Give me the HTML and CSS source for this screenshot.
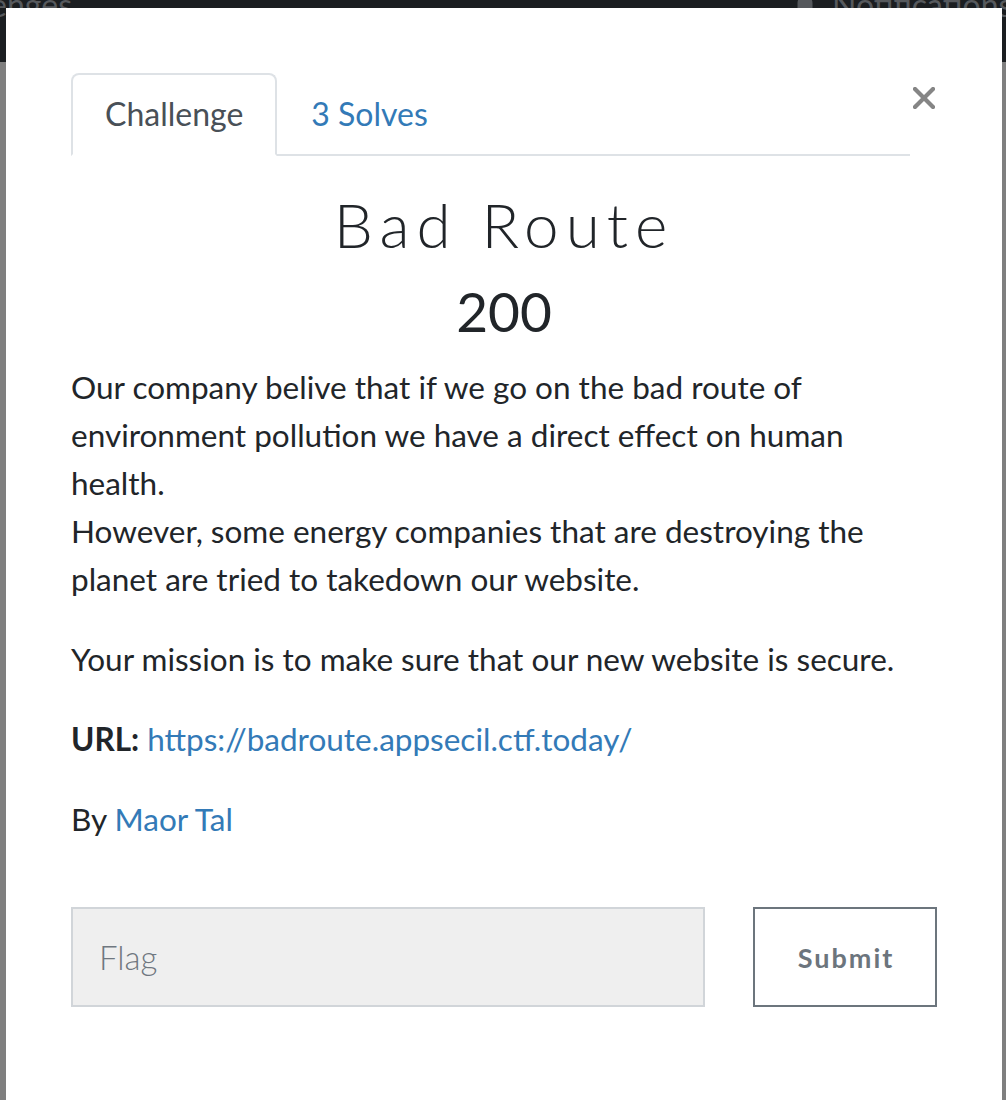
FILE: index.html
```html
<!DOCTYPE html>
<html lang="en">
<head>
<meta charset="utf-8">
<title>Bad Route</title>
<link rel="stylesheet" href="styles.css">
</head>
<body>
<header class="navbar">
  <div class="navbar-inner">
    <div class="nav-left"><span class="nav-text">Challenges</span></div>
    <div class="nav-right">
      <svg class="bell" viewBox="0 0 20 24" width="20" height="24"><path d="M10 0c1.2 0 2 .8 2 2v.6c3.4.9 5.5 3.8 5.5 7.4v6l2.5 3v1H0v-1l2.5-3v-6C2.5 6.4 4.6 3.5 8 2.6V2c0-1.2.8-2 2-2z" fill="#55585c"/></svg>
      <span class="nav-text">Notifications</span>
    </div>
  </div>
</header>

<div class="modal">
  <div class="modal-body">
    <div class="tab-row">
      <ul class="tabs">
        <li class="tab active">Challenge</li>
        <li class="tab">3 Solves</li>
      </ul>
      <button class="close" type="button" aria-label="Close">
        <svg viewBox="0 0 22 22" width="22" height="22"><path d="M2 2L20 20M20 2L2 20" stroke="#858585" stroke-width="4.2" stroke-linecap="square"/></svg>
      </button>
    </div>

    <h2 class="title">Bad Route</h2>
    <h3 class="points">200</h3>

    <div class="desc">
      <p>Our company belive that if we go on the bad route of environment pollution we have a direct effect on human health.<br>However, some energy companies that are destroying the planet are tried to takedown our website.</p>
      <p>Your mission is to make sure that our new website is secure.</p>
      <p><strong>URL:</strong> <a href="#">https://badroute.appsecil.ctf.today/</a></p>
      <p>By <a href="#">Maor Tal</a></p>
    </div>

    <form class="flag-form">
      <input class="flag-input" type="text" placeholder="Flag">
      <button class="submit" type="button">Submit</button>
    </form>
  </div>
</div>
</body>
</html>
```

FILE: styles.css
```css
html, body {
  margin: 0;
  padding: 0;
}

body {
  width: 1006px;
  height: 1100px;
  overflow: hidden;
  background: #7f7f7f;
  font-family: "Lato", "Liberation Sans", sans-serif;
  position: relative;
}

.navbar {
  height: 62px;
  background: #1b1e21;
  overflow: hidden;
}

.navbar-inner {
  display: grid;
  grid-template-columns: 72px 723px auto;
  margin-top: -19px;
  font-size: 32px;
  line-height: 48px;
  color: #56595d;
}

.nav-left {
  display: flex;
  justify-content: flex-end;
  white-space: nowrap;
}

.nav-right {
  grid-column: 3;
  display: flex;
  align-items: center;
  gap: 17px;
  white-space: nowrap;
}

.bell {
  display: block;
}

.modal {
  position: absolute;
  top: 8px;
  left: 6px;
  width: 996px;
  height: 1120px;
  background: #fff;
}

.modal-body {
  padding: 65px 65px 0;
}

.tab-row {
  display: flex;
  align-items: flex-start;
}

.tabs {
  flex: 1;
  display: flex;
  margin: 0;
  padding: 0;
  list-style: none;
  border-bottom: 2px solid #dee2e6;
}

.tab {
  padding: 16px 32px 17px;
  margin-bottom: -2px;
  border: 2px solid transparent;
  border-radius: 8px 8px 0 0;
  font-size: 32px;
  line-height: 46px;
  color: #337ab7;
}

.tab.active {
  color: #495057;
  background: #fff;
  border-color: #dee2e6 #dee2e6 #fff;
}

.close {
  width: 27px;
  height: 50px;
  padding: 0;
  border: none;
  background: none;
  display: flex;
  align-items: center;
  justify-content: center;
}

.close svg {
  display: block;
}

.title {
  margin: 31px 0 0;
  text-align: center;
  font-size: 62px;
  line-height: 1.2;
  font-weight: 300;
  letter-spacing: 7px;
  padding-left: 0;
  color: #212529;
}

.points {
  margin: 17px 0 0;
  text-align: center;
  font-size: 55px;
  line-height: 1.2;
  font-weight: 400;
  color: #212529;
}

.desc {
  margin-top: 19px;
  font-size: 31.5px;
  line-height: 48px;
  color: #212529;
}

.desc p {
  margin: 0 0 32px;
}

.desc strong {
  font-weight: 700;
}

.desc a {
  color: #337ab7;
  text-decoration: none;
}

.flag-form {
  display: flex;
  gap: 48px;
  margin-top: 64px;
}

.flag-input {
  flex: 1;
  min-width: 0;
  height: 100px;
  box-sizing: border-box;
  padding: 0 26px;
  border: 2px solid #d1d5d9;
  background: #efefef;
  font-family: "Lato", "Liberation Sans", sans-serif;
  font-size: 33px;
  font-weight: 300;
  color: #495057;
  outline: none;
}

.flag-input::placeholder {
  color: #6f7780;
  opacity: 1;
}

.submit {
  width: 184px;
  height: 100px;
  box-sizing: border-box;
  border: 2px solid #6c757d;
  background: #fff;
  color: #6c757d;
  font-family: "Lato", "Liberation Sans", sans-serif;
  font-size: 27px;
  font-weight: 700;
  letter-spacing: 2px;
  padding: 0 0 0 2px;
}
```
